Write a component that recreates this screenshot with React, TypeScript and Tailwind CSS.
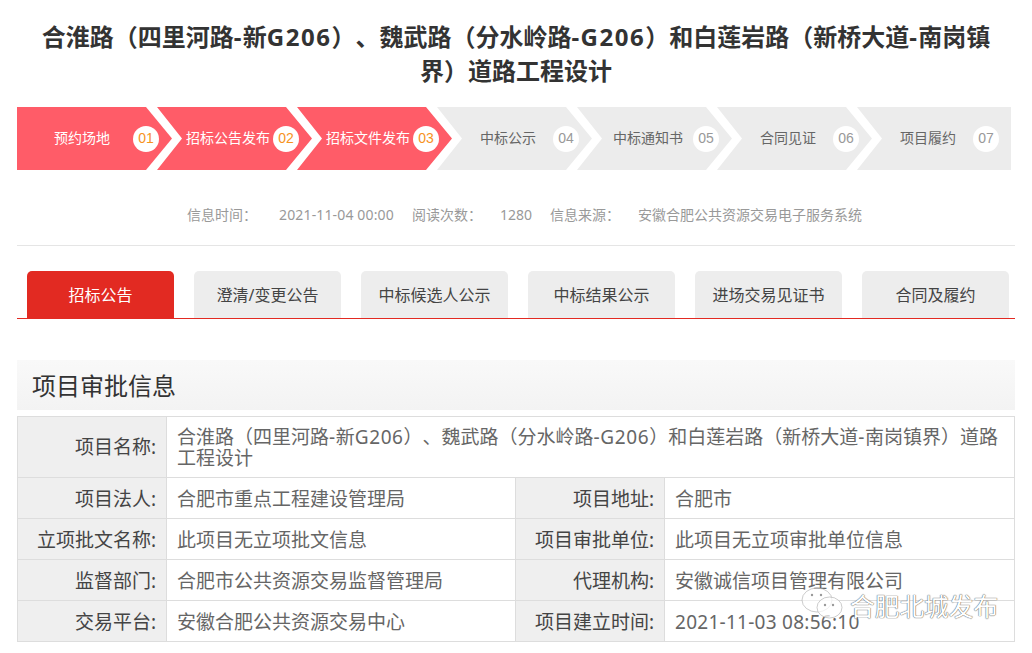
const font = "font-['Noto_Sans','Noto_Sans_CJK_SC',sans-serif] [text-spacing-trim:space-all]";

const steps = [
  { name: "预约场地", no: "01", done: true },
  { name: "招标公告发布", no: "02", done: true },
  { name: "招标文件发布", no: "03", done: true },
  { name: "中标公示", no: "04", done: false },
  { name: "中标通知书", no: "05", done: false },
  { name: "合同见证", no: "06", done: false },
  { name: "项目履约", no: "07", done: false },
];

const tabs = ["招标公告", "澄清/变更公告", "中标候选人公示", "中标结果公示", "进场交易见证书", "合同及履约"];

const rows = [
  ["项目法人:", "合肥市重点工程建设管理局", "项目地址:", "合肥市"],
  ["立项批文名称:", "此项目无立项批文信息", "项目审批单位:", "此项目无立项审批单位信息"],
  ["监督部门:", "合肥市公共资源交易监督管理局", "代理机构:", "安徽诚信项目管理有限公司"],
  ["交易平台:", "安徽合肥公共资源交易中心", "项目建立时间:", "2021-11-03 08:56:10"],
];

function stepClip(i: number) {
  if (i === 0) return "[clip-path:polygon(0_0,129px_0,155px_50%,129px_100%,0_100%)]";
  if (i === 6) return "[clip-path:polygon(0_0,100%_0,100%_100%,0_100%,25px_50%)]";
  return "[clip-path:polygon(0_0,129px_0,155px_50%,129px_100%,0_100%,25px_50%)]";
}

// Latin runs in the project name are a bit wider in the original font
function ProjectName({ wide }: { wide: string }) {
  return (
    <>
      合淮路（四里河路<span className={wide}>-</span>新<span className={wide}>G206</span>）、魏武路（分水岭路
      <span className={wide}>-G206</span>）和白莲岩路（新桥大道<span className={wide}>-</span>南岗镇界）道路工程设计
    </>
  );
}

export default function App() {
  return (
    <div className={`relative h-[653px] w-[1032px] overflow-hidden bg-white ${font}`}>
      <h1 className="mx-auto w-[960px] pt-[20px] text-center text-[24px] leading-[34px] font-bold text-[#333]">
        <ProjectName wide="tracking-[1.5px]" />
      </h1>

      {/* Steps */}
      <div className="mt-[19px] ml-[17px] flex h-[63px] w-[994px] font-['Liberation_Sans','Noto_Sans_CJK_SC',sans-serif]">
        {steps.map((s, i) => (
          <div
            key={s.no}
            className={`flex h-full shrink-0 items-center ${stepClip(i)} ${i === 0 ? "pl-[14px]" : "-ml-[15px] pl-[26px]"} ${i === 6 ? "w-[154px] pr-[12px]" : "w-[155px] pr-[13px]"} ${s.done ? "bg-[#ff5c68] text-white" : "bg-[#ececec] text-[#666]"}`}
          >
            <span className="flex-1 whitespace-nowrap text-center text-[14px]">{s.name}</span>
            <span
              className={`flex h-[26px] w-[26px] shrink-0 items-center justify-center rounded-full bg-white text-[14px] ${s.done ? "text-[#f7931e]" : "text-[#999]"}`}
            >
              {s.no}
            </span>
          </div>
        ))}
      </div>

      {/* Meta line */}
      <div className="mx-[17px] flex h-[76px] items-center border-b border-[#e5e5e5] pt-[14px] pl-[170px] text-[14px] whitespace-nowrap text-[#999]">
        <span>信息时间：</span>
        <span className="ml-[22px] tracking-[0.15px]">2021-11-04 00:00</span>
        <span className="ml-[18px]">阅读次数：</span>
        <span className="ml-[18px]">1280</span>
        <span className="ml-[18px]">信息来源：</span>
        <span className="ml-[18px]">安徽合肥公共资源交易电子服务系统</span>
      </div>

      {/* Tabs */}
      <div className="mx-[17px] mt-[25px] flex h-[48px] gap-[20px] border-b border-[#e22a22] pl-[10px]">
        {tabs.map((t, i) => (
          <div
            key={t}
            className={`flex h-[47px] w-[147px] items-center justify-center rounded-t-[5px] pt-[1px] text-[16px] ${i === 0 ? "bg-[#e22a22] text-white" : "bg-[#ededed] text-[#444]"}`}
          >
            {t}
          </div>
        ))}
      </div>

      {/* Section title */}
      <div className="mx-[17px] mt-[41px] flex h-[50px] w-[998px] items-center bg-gradient-to-b from-[#f9f9f9] to-[#f3f3f3] pt-[2px] pl-[15px] text-[24px] text-[#333]">
        项目审批信息
      </div>

      {/* Table */}
      <div className="mt-[6px] ml-[17px] grid w-[998px] grid-cols-[148px_349px_149px_1fr] border border-[#ddd] text-[19px] text-[#666]">
        <div className="flex h-[60px] items-center justify-end bg-[#efefef] pt-[1px] pr-[10px] text-[#444]">项目名称:</div>
        <div className="col-span-3 flex h-[60px] items-center border-l border-[#ddd] pt-[2px] pr-[10px] pl-[10px] leading-[21px]">
          <span>
            <ProjectName wide="tracking-[0.6px]" />
          </span>
        </div>
        {rows.map((r) => (
          <div key={r[0]} className="col-span-4 grid h-[41px] grid-cols-subgrid border-t border-[#ddd]">
            <div className="flex items-center justify-end bg-[#efefef] pt-[2px] pr-[10px] text-[#444]">{r[0]}</div>
            <div className="flex items-center border-l border-[#ddd] pt-[2px] pl-[10px]">{r[1]}</div>
            <div className="flex items-center justify-end border-l border-[#ddd] bg-[#efefef] pt-[2px] pr-[10px] text-[#444]">{r[2]}</div>
            <div className={`flex items-center border-l border-[#ddd] pt-[2px] pl-[10px] ${r[3].startsWith("2021") ? "tracking-[0.27px]" : ""}`}>{r[3]}</div>
          </div>
        ))}
      </div>

      {/* WeChat watermark */}
      <div className="absolute top-[587px] left-[801px] flex items-start gap-[7px]">
        <svg width="42" height="32" viewBox="0 0 42 32" fill="none" strokeWidth="1">
          <ellipse cx="16" cy="13" rx="15" ry="12" fill="#ffffff" fillOpacity="0.5" stroke="#aaa" strokeOpacity="0.6" />
          <ellipse cx="28.5" cy="20.5" rx="12.5" ry="10.5" fill="#ffffff" fillOpacity="0.7" stroke="#aaa" strokeOpacity="0.6" />
          <circle cx="11" cy="8" r="1.2" fill="#999" />
          <circle cx="20" cy="8" r="1.2" fill="#999" />
          <circle cx="24" cy="18" r="1.2" fill="#999" />
          <circle cx="32" cy="18" r="1.2" fill="#999" />
        </svg>
        <span className="text-[24.7px] leading-[40px] whitespace-nowrap text-white [text-shadow:0_0_1px_#555,0_0_1px_#555]">
          合肥北城发布
        </span>
      </div>
    </div>
  );
}
